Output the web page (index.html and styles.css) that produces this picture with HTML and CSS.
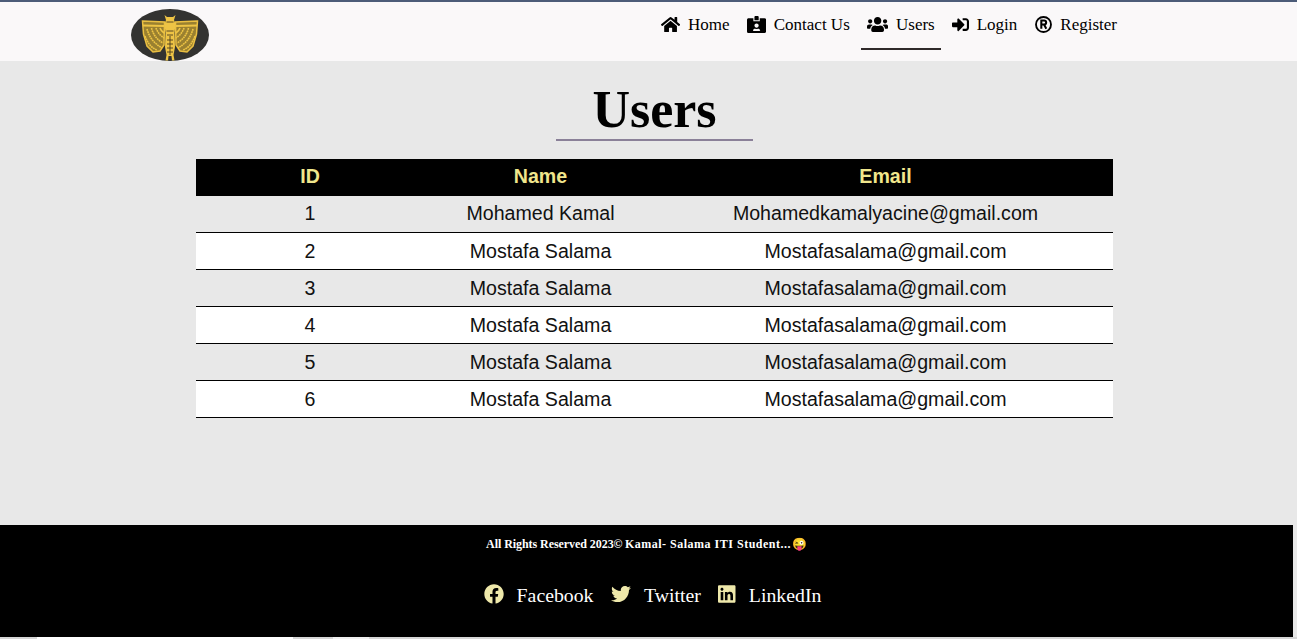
FILE: index.html
```html
<!DOCTYPE html>
<html lang="en">
<head>
  <meta charset="UTF-8" />
  <meta name="viewport" content="width=device-width, initial-scale=1.0"/>
  <title>Users</title>
  <link rel="stylesheet" href="styles.css">
</head>
<body>
  <header class="navbar">
    <svg class="logo" viewBox="0 0 78 52" aria-label="Logo">
      <ellipse cx="39" cy="26" rx="39" ry="26" fill="#333331"/>
      <g id="wing">
        <path d="M11.5 12 L33.5 13 L33 36 L29 42 L22 43 L16 37 L12.5 25 Z" fill="#9a8030" stroke="#eabf42" stroke-width="1.5"/>
        <g fill="none" stroke="#eec445">
          <path d="M12 16.5 L33 17" stroke-width="2"/>
          <path d="M16 20 Q19 32 31 39" stroke-width="1.6" stroke-dasharray="1.8 .6"/>
          <path d="M20.5 19 Q23 29 32 34" stroke-width="1.6" stroke-dasharray="1.8 .6"/>
          <path d="M25 19 Q27 25 33 29" stroke-width="1.6" stroke-dasharray="1.8 .6"/>
          <path d="M29 19 Q30 22 33 24" stroke-width="1.6"/>
          <path d="M14 27 Q18 38 26 41" stroke-width="1.6" stroke-dasharray="1.8 .6"/>
        </g>
      </g>
      <use href="#wing" transform="matrix(-1 0 0 1 78 0)"/>
      <path d="M35 11 L33.5 6 L36 8 H42 L44.5 6 L43 11 L44.5 15 L43.5 24 L44 38 L42.5 46 L43.5 51.5 L41 51.5 L40.5 47 H37.5 L37 51.5 L34.5 51.5 L35.5 46 L34 38 L34.5 24 L33.5 15 Z" fill="#eec445"/>
      <path d="M35.5 13 H42.5 M35.5 22 H42.5 M36 26 H42 M36 31 H42 M36 35 H42 M36 39 H42 M36 43 H42 M39 27 V46" fill="none" stroke="#4a3d1e" stroke-width=".9"/>
    </svg>
    <nav class="nav-links">
      <a href="#" class="nav-link">
        <svg class="nav-icon" viewBox="0 0 576 512"><path d="M280.37 148.26L96 300.11V464a16 16 0 0 0 16 16l112.06-.29a16 16 0 0 0 15.92-16V368a16 16 0 0 1 16-16h64a16 16 0 0 1 16 16v95.64a16 16 0 0 0 16 16.05L464 480a16 16 0 0 0 16-16V300L295.67 148.26a12.19 12.19 0 0 0-15.3 0zM571.6 251.47L488 182.56V44.05a12 12 0 0 0-12-12h-56a12 12 0 0 0-12 12v72.61L318.47 43a48 48 0 0 0-61 0L4.34 251.47a12 12 0 0 0-1.6 16.9l25.5 31A12 12 0 0 0 45.15 301l235.22-193.74a12.19 12.19 0 0 1 15.3 0L530.9 301a12 12 0 0 0 16.9-1.6l25.5-31a12 12 0 0 0-1.7-16.93z"/></svg>
        Home
      </a>
      <a href="#" class="nav-link">
        <svg class="nav-icon" viewBox="0 0 576 512"><path d="M528 64H384v96H192V64H48C21.5 64 0 85.5 0 112v352c0 26.5 21.5 48 48 48h480c26.5 0 48-21.5 48-48V112c0-26.5-21.5-48-48-48zM288 224c35.3 0 64 28.7 64 64s-28.7 64-64 64-64-28.7-64-64 28.7-64 64-64zm93.3 224H194.7c-10.4 0-18.8-10-15.6-19.8 8.3-25.6 32.4-44.2 60.9-44.2h8.2c12.3 5.1 25.7 8 39.8 8s27.6-2.9 39.8-8h8.2c28.4 0 52.5 18.5 60.9 44.2 3.2 9.8-5.2 19.8-15.6 19.8zM352 32c0-17.7-14.3-32-32-32h-64c-17.7 0-32 14.3-32 32v96h128V32z"/></svg>
        Contact Us
      </a>
      <a href="#" class="nav-link active">
        <svg class="nav-icon" viewBox="0 0 640 512"><path d="M96 224c35.3 0 64-28.7 64-64s-28.7-64-64-64-64 28.7-64 64 28.7 64 64 64zm448 0c35.3 0 64-28.7 64-64s-28.7-64-64-64-64 28.7-64 64 28.7 64 64 64zm32 32h-64c-17.6 0-33.5 7.1-45.1 18.6 40.3 22.1 68.9 62 75.1 109.4h66c17.7 0 32-14.3 32-32v-32c0-35.3-28.7-64-64-64zm-256 0c61.9 0 112-50.1 112-112S381.9 32 320 32 208 82.1 208 144s50.1 112 112 112zm76.8 32h-8.3c-20.8 10-43.9 16-68.5 16s-47.6-6-68.5-16h-8.3C179.6 288 128 339.6 128 403.2V432c0 26.5 21.5 48 48 48h288c26.5 0 48-21.5 48-48v-28.8c0-63.6-51.6-115.2-115.2-115.2zm-223.7-13.4C161.5 263.1 145.6 256 128 256H64c-35.3 0-64 28.7-64 64v32c0 17.7 14.3 32 32 32h65.9c6.3-47.4 34.9-87.3 75.2-109.4z"/></svg>
        Users
      </a>
      <a href="#" class="nav-link">
        <svg class="nav-icon" viewBox="0 0 512 512"><path d="M416 448h-84c-6.6 0-12-5.4-12-12v-40c0-6.6 5.4-12 12-12h84c17.7 0 32-14.3 32-32V160c0-17.7-14.3-32-32-32h-84c-6.6 0-12-5.4-12-12V76c0-6.6 5.4-12 12-12h84c53 0 96 43 96 96v192c0 53-43 96-96 96zm-47-201L201 79c-15-15-41-4.5-41 17v96H24c-13.3 0-24 10.7-24 24v96c0 13.3 10.7 24 24 24h136v96c0 21.5 26 32 41 17l168-168c9.3-9.4 9.3-24.6 0-34z"/></svg>
        Login
      </a>
      <a href="#" class="nav-link">
        <svg class="nav-icon" viewBox="0 0 512 512"><circle cx="256" cy="256" r="226" fill="none" stroke="#000" stroke-width="56"/><path d="M190 384V134h82c40 0 64 24 64 62s-24 62-64 62h-82M272 258l68 126" fill="none" stroke="#000" stroke-width="62"/></svg>
        Register
      </a>
    </nav>
  </header>

  <main class="content">
    <h1 class="page-title">Users</h1>
    <table class="users-table">
      <thead>
        <tr><th>ID</th><th>Name</th><th>Email</th></tr>
      </thead>
      <tbody>
        <tr><td>1</td><td>Mohamed Kamal</td><td>Mohamedkamalyacine@gmail.com</td></tr>
        <tr><td>2</td><td>Mostafa Salama</td><td>Mostafasalama@gmail.com</td></tr>
        <tr><td>3</td><td>Mostafa Salama</td><td>Mostafasalama@gmail.com</td></tr>
        <tr><td>4</td><td>Mostafa Salama</td><td>Mostafasalama@gmail.com</td></tr>
        <tr><td>5</td><td>Mostafa Salama</td><td>Mostafasalama@gmail.com</td></tr>
        <tr><td>6</td><td>Mostafa Salama</td><td>Mostafasalama@gmail.com</td></tr>
      </tbody>
    </table>
  </main>

  <footer class="footer">
    <p class="copyright">All Rights Reserved 2023© <span class="names">Kamal- Salama ITI Student...</span><span class="emoji">😜</span></p>
    <div class="socials">
      <a href="#" class="social-link">
        <svg class="social-icon" viewBox="0 0 512 512"><path d="M504 256C504 119 393 8 256 8S8 119 8 256c0 123.78 90.69 226.38 209.25 245V327.69h-63V256h63v-54.64c0-62.15 37-96.48 93.67-96.48 27.14 0 55.52 4.84 55.52 4.84v61h-31.28c-30.8 0-40.41 19.12-40.41 38.73V256h68.78l-11 71.69h-57.78V501C413.31 482.38 504 379.78 504 256z"/></svg>
        Facebook
      </a>
      <a href="#" class="social-link">
        <svg class="social-icon" viewBox="0 0 512 512"><path d="M459.37 151.716c.325 4.548.325 9.097.325 13.645 0 138.72-105.583 298.558-298.558 298.558-59.452 0-114.68-17.219-161.137-47.106 8.447.974 16.568 1.299 25.34 1.299 49.055 0 94.213-16.568 130.274-44.832-46.132-.975-84.792-31.188-98.112-72.772 6.498.974 12.995 1.624 19.818 1.624 9.421 0 18.843-1.3 27.614-3.573-48.081-9.747-84.143-51.98-84.143-102.985v-1.299c13.969 7.797 30.214 12.67 47.431 13.319-28.264-18.843-46.781-51.005-46.781-87.391 0-19.492 5.197-37.36 14.294-52.954 51.655 63.675 129.3 105.258 216.365 109.807-1.624-7.797-2.599-15.918-2.599-24.04 0-57.828 46.782-104.934 104.934-104.934 30.213 0 57.502 12.67 76.67 33.137 23.715-4.548 46.456-13.32 66.599-25.34-7.798 24.366-24.366 44.833-46.132 57.827 21.117-2.273 41.584-8.122 60.426-16.243-14.292 20.791-32.161 39.308-52.628 54.253z"/></svg>
        Twitter
      </a>
      <a href="#" class="social-link">
        <svg class="social-icon" viewBox="0 0 448 512"><path d="M416 32H31.9C14.3 32 0 46.5 0 64.3v383.4C0 465.5 14.3 480 31.9 480H416c17.6 0 32-14.5 32-32.3V64.3c0-17.8-14.4-32.3-32-32.3zM135.4 416H69V202.2h66.5V416zm-33.2-243c-21.3 0-38.5-17.3-38.5-38.5S80.9 96 102.2 96c21.2 0 38.5 17.3 38.5 38.5 0 21.3-17.2 38.5-38.5 38.5zm282.1 243h-66.4V312c0-24.8-.5-56.7-34.5-56.7-34.6 0-39.9 27-39.9 54.9V416h-66.4V202.2h63.7v29.2h.9c8.9-16.8 30.6-34.5 62.9-34.5 67.2 0 79.7 44.3 79.7 101.9V416z"/></svg>
        LinkedIn
      </a>
    </div>
  </footer>
  <div class="page-edge">
    <span class="edge-light"></span>
    <span class="edge-soft"></span>
  </div>
</body>
</html>
```

FILE: styles.css
```css
* {
  box-sizing: border-box;
}
html, body {
  height: 639px;
  overflow: hidden;
}
body {
  margin: 0;
  display: flex;
  flex-direction: column;
  background: #e8e8e8;
  font-family: "Liberation Serif", serif;
}
a {
  color: inherit;
  text-decoration: none;
}

.navbar {
  height: 61px;
  display: flex;
  align-items: flex-start;
  justify-content: space-between;
  padding: 0 174px 0 131px;
  background: #faf8f9;
  border-top: 2px solid #4c5c78;
}
.logo {
  width: 78px;
  height: 52px;
  margin-top: 7px;
}
.nav-links {
  display: flex;
}
.nav-link {
  height: 48px;
  display: flex;
  align-items: center;
  gap: 8px;
  padding: 0 6px;
  margin-left: 5px;
  font-size: 17px;
  color: #000;
  border-bottom: 2px solid transparent;
}
.nav-link:last-child {
  margin-left: 6px;
}
.nav-link.active {
  border-bottom-color: #2f2a2a;
}
.nav-icon {
  height: 17px;
  width: auto;
  margin-bottom: 2px;
  fill: #000;
}

.content {
  flex: 1;
  display: flex;
  flex-direction: column;
  align-items: center;
  padding-left: 10px;
}
.page-title {
  width: 197px;
  height: 80px;
  margin: 0 0 18px 2px;
  padding-top: 19px;
  border-bottom: 2px solid #8a8098;
  text-align: center;
  font-size: 52px;
  line-height: 60px;
  color: #000;
}
.users-table {
  width: 917px;
  margin-left: 1px;
  border-collapse: separate;
  border-spacing: 0;
  table-layout: fixed;
  font-family: "Liberation Sans", sans-serif;
  font-size: 19.6px;
  text-align: center;
}
.users-table th, .users-table td {
  height: 37px;
  padding: 0;
}
.users-table th:nth-child(1) { width: 227px; }
.users-table th:nth-child(2) { width: 236px; }
.users-table th {
  padding-bottom: 2px;
  background: #000;
  color: #f0e68c;
  font-weight: bold;
}
.users-table td {
  color: #111;
  border-bottom: 1px solid #000;
}
.users-table tr > :first-child {
  padding-left: 2px;
}
.users-table tbody tr:first-child td {
  padding-bottom: 2px;
}
.users-table tbody tr:nth-child(even) {
  background: #fff;
}

.footer {
  width: 1293px;
  height: 112px;
  background: #000;
  color: #fff;
  text-align: center;
}
.copyright {
  margin: 0;
  padding-top: 11px;
  font-size: 12px;
  font-weight: bold;
  line-height: 16px;
  letter-spacing: -0.06px;
}
.names {
  margin-left: -0.5px;
  letter-spacing: 0.5px;
}
.emoji {
  font-size: 12px;
  margin-left: 1px;
}
.socials {
  display: flex;
  justify-content: center;
  gap: 17.5px;
  margin-top: 30px;
  padding-left: 12px;
}
.social-link {
  display: flex;
  align-items: center;
  gap: 13px;
  font-size: 19.8px;
  line-height: 26px;
}
.social-icon {
  height: 20px;
  width: auto;
  margin-bottom: 2px;
  fill: #eee8aa;
}

/* strip along the bottom edge of the window */
.page-edge {
  height: 2px;
  display: flex;
  padding-left: 37px;
  background: #d6d6d6;
}
.edge-light {
  width: 256px;
  background: #fff;
}
.edge-soft {
  width: 36px;
  margin-left: 40px;
  background: #f0f0f0;
}
```
